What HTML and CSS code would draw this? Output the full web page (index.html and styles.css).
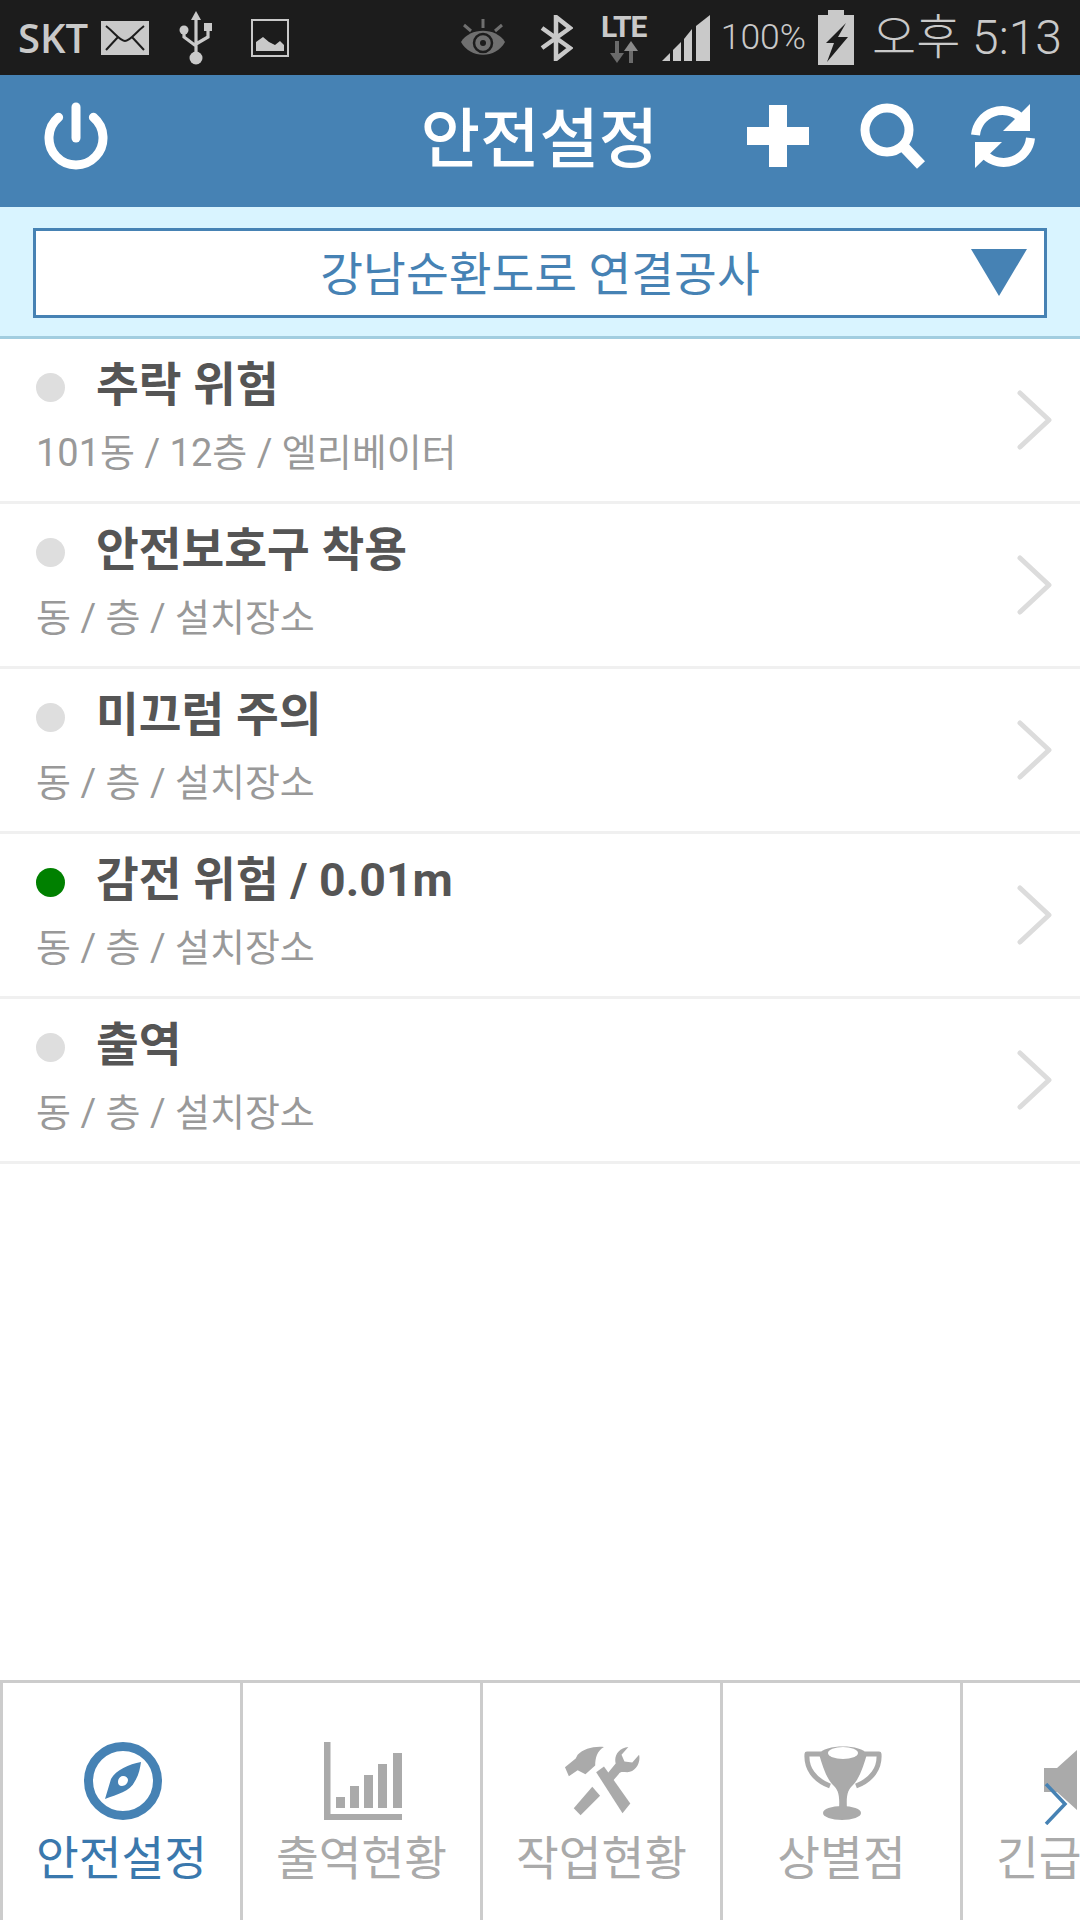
FILE: index.html
```html
<!DOCTYPE html>
<html lang="ko">
<head>
<meta charset="utf-8">
<title>안전설정</title>
<link rel="stylesheet" href="styles.css">
</head>
<body>
<div class="app">
  <div class="status">
    <div class="status-left">
      <span class="carrier">SKT</span>
      <svg class="ic-mail" viewBox="0 0 48 34"><rect width="48" height="34" fill="#c9c9c9"/><path d="M5 5 C14 12 19 20 24 20 C29 20 34 12 43 5 M5 29 L17 16 M43 29 L31 16" fill="none" stroke="#1c1c1c" stroke-width="2"/></svg>
      <svg class="ic-usb" viewBox="0 0 34 54"><polygon points="17,0 12,9 22,9" fill="#c9c9c9"/><circle cx="17" cy="47" r="6.5" fill="#c9c9c9"/><circle cx="5" cy="19" r="4.5" fill="#c9c9c9"/><rect x="25" y="12" width="8" height="8" fill="#c9c9c9"/><path d="M17 6 V44 M5 20 V26 L17 35 M29 18 V26 L17 33" fill="none" stroke="#c9c9c9" stroke-width="3.2"/></svg>
      <svg class="ic-image" viewBox="0 0 38 38"><rect x="1" y="1" width="36" height="36" fill="none" stroke="#c9c9c9" stroke-width="2"/><path d="M5 32 V23 L12 18 L18 23 L24 26 L29 22 L33 26 V32 Z" fill="#c9c9c9"/></svg>
    </div>
    <div class="status-right">
      <svg class="ic-eye" viewBox="0 0 46 38"><path d="M1 23 C10 8 36 8 45 23 C36 40 10 40 1 23 Z" fill="#6f6f6f"/><circle cx="23" cy="24" r="9" fill="none" stroke="#1c1c1c" stroke-width="2.5"/><circle cx="23" cy="24" r="3" fill="#1c1c1c"/><path d="M23 0 V9 M4 6 L11 12 M42 6 L35 12" stroke="#6f6f6f" stroke-width="3"/></svg>
      <svg class="ic-bt" viewBox="0 0 34 46"><path d="M3 13 L31 33 L17 44 V2 L31 13 L3 33" fill="none" stroke="#c9c9c9" stroke-width="4.5"/></svg>
      <div class="lte">
        <span class="lte-text">LTE</span>
        <svg class="ic-lte" viewBox="0 0 28 22"><path d="M7 0 V13 M21 22 V9" stroke="#6b6b6b" stroke-width="4"/><polygon points="0,12 14,12 7,22" fill="#6b6b6b"/><polygon points="14,10 28,10 21,0" fill="#8a8a8a"/></svg>
      </div>
      <svg class="ic-signal" viewBox="0 0 48 46"><polygon points="0,46 8,38 8,46" fill="#c9c9c9"/><polygon points="11,35 19,27 19,46 11,46" fill="#c9c9c9"/><polygon points="22,24 30,14 30,46 22,46" fill="#c9c9c9"/><polygon points="34,11 48,0 48,46 34,46" fill="#c9c9c9"/></svg>
      <span class="battery-text">100%</span>
      <svg class="ic-battery" viewBox="0 0 36 55"><path d="M10 0 H26 V5 H36 V55 H0 V5 H10 Z" fill="#c9c9c9"/><polygon points="28,13 8,33 16,33 9,52 30,27 20,27" fill="#1c1c1c"/></svg>
      <span class="clock">오후 5:13</span>
    </div>
  </div>

  <header class="appbar">
    <div class="appbar-left">
      <svg class="ic-power" viewBox="0 0 64 68"><path d="M14.6 15.3 A27 27 0 1 0 49.4 15.3" fill="none" stroke="#fff" stroke-width="9" stroke-linecap="round"/><path d="M32 5 V36" fill="none" stroke="#fff" stroke-width="9" stroke-linecap="round"/></svg>
    </div>
    <h1 class="appbar-title">안전설정</h1>
    <div class="appbar-actions">
      <svg class="ic-plus" viewBox="0 0 62 62"><path d="M22 0 H40 V22 H62 V40 H40 V62 H22 V40 H0 V22 H22 Z" fill="#fff"/></svg>
      <svg class="ic-search" viewBox="0 0 66 66"><circle cx="27" cy="27" r="22" fill="none" stroke="#fff" stroke-width="9"/><path d="M43 43 L61 62" stroke="#fff" stroke-width="11"/></svg>
      <svg class="ic-refresh" viewBox="0 0 64 64"><path d="M4.5 31 A27 27 0 0 1 50 14" fill="none" stroke="#fff" stroke-width="9"/><polygon points="59,0 59,27 32,27" fill="#fff"/><path d="M59.5 34 A27 27 0 0 1 14 51" fill="none" stroke="#fff" stroke-width="9"/><polygon points="4,64 4,38 31,38" fill="#fff"/></svg>
    </div>
  </header>

  <div class="filter">
    <div class="select">
      <span class="select-text">강남순환도로 연결공사</span>
      <span class="select-arrow"></span>
    </div>
  </div>

  <main class="list">
    <div class="row">
      <div class="row-body">
        <div class="row-title"><span class="dot"></span><span>추락 위험</span></div>
        <div class="row-sub">101동 / 12층 / 엘리베이터</div>
      </div>
      <svg class="chev" viewBox="0 0 36 60"><path d="M3 3 L32 30 L3 57" fill="none" stroke="#dcdcdc" stroke-width="5" stroke-linecap="round" stroke-linejoin="round"/></svg>
    </div>
    <div class="row">
      <div class="row-body">
        <div class="row-title"><span class="dot"></span><span>안전보호구 착용</span></div>
        <div class="row-sub">동 / 층 / 설치장소</div>
      </div>
      <svg class="chev" viewBox="0 0 36 60"><path d="M3 3 L32 30 L3 57" fill="none" stroke="#dcdcdc" stroke-width="5" stroke-linecap="round" stroke-linejoin="round"/></svg>
    </div>
    <div class="row">
      <div class="row-body">
        <div class="row-title"><span class="dot"></span><span>미끄럼 주의</span></div>
        <div class="row-sub">동 / 층 / 설치장소</div>
      </div>
      <svg class="chev" viewBox="0 0 36 60"><path d="M3 3 L32 30 L3 57" fill="none" stroke="#dcdcdc" stroke-width="5" stroke-linecap="round" stroke-linejoin="round"/></svg>
    </div>
    <div class="row">
      <div class="row-body">
        <div class="row-title"><span class="dot dot-on"></span><span>감전 위험 / 0.01m</span></div>
        <div class="row-sub">동 / 층 / 설치장소</div>
      </div>
      <svg class="chev" viewBox="0 0 36 60"><path d="M3 3 L32 30 L3 57" fill="none" stroke="#dcdcdc" stroke-width="5" stroke-linecap="round" stroke-linejoin="round"/></svg>
    </div>
    <div class="row">
      <div class="row-body">
        <div class="row-title"><span class="dot"></span><span>출역</span></div>
        <div class="row-sub">동 / 층 / 설치장소</div>
      </div>
      <svg class="chev" viewBox="0 0 36 60"><path d="M3 3 L32 30 L3 57" fill="none" stroke="#dcdcdc" stroke-width="5" stroke-linecap="round" stroke-linejoin="round"/></svg>
    </div>
  </main>

  <nav class="tabs">
    <div class="tab tab-active">
      <svg class="tab-icon" viewBox="0 0 78 78"><circle cx="39" cy="39" r="34.5" fill="none" stroke="#4682b4" stroke-width="9"/><path fill-rule="evenodd" d="M57 20 C45 22 32 28 27 37 L21 57 C33 52 46 50 51 39 C55 33 56 26 57 20 Z M39 34 C42 34 44 36 44 38 C44 41 41 44 38 44 C35 44 34 42 34 40 C34 37 36 34 39 34 Z" fill="#4682b4"/></svg>
      <span class="tab-label">안전설정</span>
    </div>
    <div class="tab">
      <svg class="tab-icon" viewBox="0 0 78 78"><g fill="#aaa"><rect x="0" y="0" width="6.5" height="78"/><rect x="0" y="72" width="78" height="6"/><rect x="12" y="55" width="9" height="11"/><rect x="26" y="44" width="9" height="22"/><rect x="40" y="33" width="9" height="33"/><rect x="54" y="22" width="9" height="44"/><rect x="69" y="11" width="9" height="55"/></g></svg>
      <span class="tab-label">출역현황</span>
    </div>
    <div class="tab">
      <svg class="tab-icon" viewBox="0 0 80 78"><g fill="#aaa"><path d="M41 4 C30 3 20 6 14 12 L12 16 L1 25 L5 34 L14 28 L22 32 L32 23 C32 15 34 8 41 4 Z"/><path d="M33 30 L41 24 L68 62 L60 72 Z"/><path d="M29 45 L37 54 L17 74 L10 67 Z"/><path d="M44 32 L53 21 C51 13 56 5 66 4 L59 12 L62 19 L70 20 L77 12 C79 21 73 30 65 30 C60 30 58 29 56 32 L50 39 Z"/></g></svg>
      <span class="tab-label">작업현황</span>
    </div>
    <div class="tab">
      <svg class="tab-icon" viewBox="0 0 78 78"><g fill="#aaa"><path d="M15 12 C20 2 58 2 63 12 C60 22 56 36 49 43 C44 48 42 52 43 67 H35 C36 52 34 48 29 43 C22 36 18 22 15 12 Z"/><ellipse cx="38" cy="71" rx="19" ry="7"/></g><path d="M17 12 H3 C2 26 10 38 26 44 M61 12 H75 C76 26 68 38 52 44" fill="none" stroke="#aaa" stroke-width="5" stroke-linejoin="round"/><ellipse cx="39" cy="11" rx="15" ry="6" fill="#fff"/></svg>
      <span class="tab-label">상별점</span>
    </div>
    <div class="tab">
      <svg class="tab-icon" viewBox="0 0 78 78"><polygon points="0,26 13,26 33,8 33,68 13,50 0,50" fill="#aaa"/></svg>
      <span class="tab-label">긴급방송</span>
    </div>
    <svg class="tabs-more" viewBox="0 0 24 42"><path d="M2 1 L21 21 L2 41" fill="none" stroke="#4682b4" stroke-width="3.5"/></svg>
  </nav>
</div>
</body>
</html>
```

FILE: styles.css
```css
* { box-sizing: border-box; }
html, body { margin: 0; padding: 0; background: #fff; }
body { font-family: Roboto, "Noto Sans CJK KR", sans-serif; }
svg { display: block; flex: none; }

.app { width: 1080px; height: 1920px; display: flex; flex-direction: column; overflow: hidden; }

/* status bar */
.status { height: 75px; background: #1c1c1c; color: #c9c9c9; display: flex; align-items: center; justify-content: space-between; padding: 0 18px 0 18px; flex: none; }
.status-left, .status-right { display: flex; align-items: center; }
.carrier { font-family: "Open Sans", sans-serif; font-weight: 600; font-size: 40px; line-height: 1; width: 83px; }
.ic-mail { width: 48px; height: 34px; }
.ic-usb { width: 34px; height: 54px; margin-left: 30px; }
.ic-image { width: 38px; height: 38px; margin-left: 38px; }
.ic-eye { width: 46px; height: 38px; }
.ic-bt { width: 34px; height: 46px; margin-left: 33px; }
.lte { width: 48px; margin-left: 27px; display: flex; flex-direction: column; align-items: center; }
.lte-text { font-weight: 700; font-size: 30px; line-height: 27px; letter-spacing: -1px; }
.ic-lte { width: 28px; height: 22px; margin-top: 1px; }
.ic-signal { width: 48px; height: 46px; margin-left: 14px; }
.battery-text { font-size: 35.5px; font-weight: 300; margin-left: 11px; line-height: 1; }
.ic-battery { width: 36px; height: 55px; margin-left: 12px; }
.clock { font-size: 48px; font-weight: 300; margin-left: 18px; line-height: 1; white-space: nowrap; }

/* app bar */
.appbar { height: 132px; background: #4682b4; display: grid; grid-template-columns: 1fr auto 1fr; align-items: center; padding: 0 45px 10px 44px; flex: none; }
.ic-power { width: 64px; height: 68px; }
.appbar-title { margin: 8px 0 0; color: #fff; font-size: 64.5px; font-weight: 500; line-height: 1; }
.appbar-actions { display: flex; align-items: center; justify-content: flex-end; gap: 45px; }
.ic-plus { width: 62px; height: 62px; margin-right: 6px; }
.ic-search { width: 66px; height: 66px; }
.ic-refresh { width: 64px; height: 64px; }

/* project filter */
.filter { height: 132px; background: #d9f4ff; border-bottom: 3px solid #a2cde0; padding: 21px 33px 0 33px; flex: none; }
.select { position: relative; height: 90px; background: #fff; border: 3px solid #4682b4; display: flex; align-items: center; justify-content: center; padding-top: 4px; }
.select-text { color: #4682b4; font-size: 46.5px; line-height: 1; }
.select-arrow { position: absolute; right: 17px; top: 18px; width: 0; height: 0; border-left: 28.5px solid transparent; border-right: 28.5px solid transparent; border-top: 47px solid #4682b4; }

/* list */
.list { flex: 1; }
.row { height: 165px; border-bottom: 3px solid #f0f0f0; display: flex; align-items: center; justify-content: space-between; padding: 0 27px 0 36px; }
.row-body { padding-bottom: 10px; }
.row-title { display: flex; align-items: center; gap: 31px; color: #555; font-size: 46.5px; font-weight: 700; line-height: 60px; }
.row-sub { color: #999; font-size: 38px; line-height: 46px; margin-top: 15px; }
.dot { width: 29px; height: 29px; border-radius: 50%; background: #dedede; flex: none; margin-top: 6px; }
.dot-on { background: #008000; }
.chev { width: 36px; height: 60px; }

/* bottom tabs */
.tabs { position: relative; height: 240px; display: flex; border-top: 3px solid #ccc; flex: none; }
.tab { width: 240px; flex: none; border-left: 3px solid #ccc; display: flex; flex-direction: column; align-items: center; padding-top: 59px; color: #aaa; }
.tab-active { color: #3a78ad; }
.tab-icon { width: 78px; height: 78px; margin-left: 2px; }
.tab-label { font-size: 46.5px; line-height: 1; margin-top: 16px; white-space: nowrap; }
.tabs-more { position: absolute; left: 1044px; top: 100px; width: 24px; height: 42px; }
```
